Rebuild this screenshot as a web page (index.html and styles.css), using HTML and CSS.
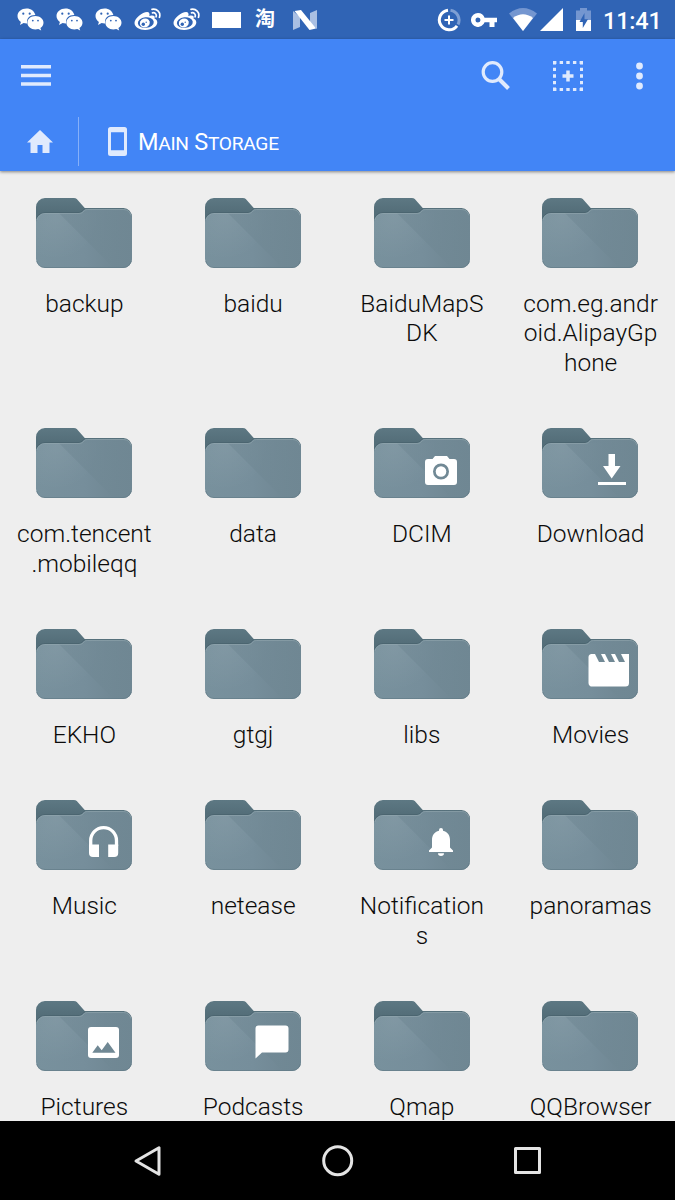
FILE: index.html
```html
<!DOCTYPE html>
<html lang="en">
<head>
<meta charset="utf-8">
<title>Main Storage</title>
<link rel="stylesheet" href="styles.css">
</head>
<body>
<svg class="defs" aria-hidden="true">
  <defs>
    <linearGradient id="front" x1="0" y1="0" x2="1" y2="0"><stop offset="0" stop-color="#78919d"/><stop offset=".5" stop-color="#768e9b"/><stop offset="1" stop-color="#6d8490"/></linearGradient>
    <linearGradient id="shade" gradientUnits="userSpaceOnUse" x1="30" y1="20" x2="80" y2="60"><stop offset="0" stop-color="#718995" stop-opacity=".6"/><stop offset="1" stop-color="#708894" stop-opacity=".75"/></linearGradient>
    <linearGradient id="back" x1="0" y1="0" x2="0" y2="1"><stop offset="0" stop-color="#5d7883"/><stop offset=".25" stop-color="#546e79"/><stop offset="1" stop-color="#526c77"/></linearGradient>
    <radialGradient id="shine" gradientUnits="userSpaceOnUse" cx="20" cy="18" r="44"><stop offset="0" stop-color="#fff" stop-opacity=".07"/><stop offset="1" stop-color="#fff" stop-opacity="0"/></radialGradient>
  </defs>
  <symbol id="folder" viewBox="0 0 97 71" preserveAspectRatio="none">
    <path fill="url(#back)" d="M0 9a9 9 0 0 1 9-9H38q2 0 3 1l8 9H88a8.500 9 0 0 1 8.500 9V55H0z"/>
    <path fill="#465f6a" d="M0 24a9 9 0 0 1 9-10H43q2 0 3-1l3-3v3L40 20H0z" opacity=".6"/>
    <path fill="url(#front)" d="M0 24a9 9 0 0 1 9-9H43q2 0 3.500-1.200L48 12.200Q49.500 11 52 11H88a8.500 9 0 0 1 8.500 9V61a9 9 0 0 1-9 9H9a9 9 0 0 1-9-9z"/>
    <path fill="url(#shine)" d="M0 24a9 9 0 0 1 9-9H70L75 70H9a9 9 0 0 1-9-9z"/>
    <path fill="url(#shade)" d="M23 15H43q2 0 3.500-1.200L48 12.200Q49.500 11 52 11H88a8.500 9 0 0 1 8.500 9V61a9 9 0 0 1-9 9H78z"/>
    <path fill="none" stroke="#95a8b1" stroke-opacity=".55" stroke-width="1" d="M1 22a8 8 0 0 1 8-6.500H43.500q2 0 3.500-1.200L48.500 12.800Q49.500 11.500 52 11.500H88a8 8 0 0 1 7.500 6"/>
    <path fill="none" stroke="#607984" stroke-opacity=".6" d="M.8 63a8.500 8.500 0 0 0 8.200 6.500H87.500a8.500 8.500 0 0 0 8.200-6.500"/>
  </symbol>
  <symbol id="wechat" viewBox="0 0 27 23">
    <path fill="#fff" d="M9.500.5C4.500.5.500 3.800.500 8c0 2.400 1.300 4.500 3.400 5.900L3 17l3.600-1.900c1.200.3 2.300.5 3.600.4C9 10.500 13 7 18.400 7.100 17.500 3.200 14 .5 9.500.500z"/>
    <path fill="#fff" d="M18.400 8c-4.500 0-8 2.900-8 6.700s3.500 6.700 8 6.700c1 0 2-.2 2.900-.4l2.900 1.600-.8-2.600c2-1.300 3.100-3.100 3.100-5.300 0-3.800-3.600-6.700-8.100-6.700z"/>
    <g fill="#3064b5"><circle cx="6.300" cy="5.700" r="1.100"/><circle cx="12.700" cy="5.700" r="1.100"/><circle cx="15.800" cy="12.600" r=".9"/><circle cx="21" cy="12.600" r=".9"/></g>
  </symbol>
  <symbol id="weibo" viewBox="0 0 27 23">
    <path fill="#fff" d="M20.500 10.500c.8-2-.3-3.300-3.300-2.900l-1.900.5c.8-2.400 0-4.100-2.200-4.100C8.500 4 .5 10.200.5 15c0 4 5 7 10.600 7 7.200 0 12.200-4 12.200-7.500 0-2-1-3.300-2.800-4z"/>
    <ellipse cx="11.800" cy="14.600" rx="8" ry="5.300" transform="rotate(-7 11.800 14.600)" fill="#3064b5"/>
    <ellipse cx="10.800" cy="15" rx="5" ry="4.400" transform="rotate(-20 10.800 15)" fill="#fff"/>
    <circle cx="9.300" cy="16.200" r="1.700" fill="#3064b5"/><circle cx="12.200" cy="14.300" r=".7" fill="#3064b5"/>
    <path fill="none" stroke="#fff" stroke-width="1.700" stroke-linecap="round" d="M18 1.300c5-1 9 3 7.500 8M18.500 4.800c2.700-.5 4.400 1.600 3.600 4"/>
  </symbol>
</svg>

<div class="screen">
  <header class="statusbar">
    <div class="notices">
      <svg class="n-icon"><use href="#wechat"/></svg>
      <svg class="n-icon"><use href="#wechat"/></svg>
      <svg class="n-icon"><use href="#wechat"/></svg>
      <svg class="n-icon"><use href="#weibo"/></svg>
      <svg class="n-icon"><use href="#weibo"/></svg>
      <span class="blank"></span>
      <span class="tao">淘</span>
      <svg class="nougat" viewBox="0 0 24 20"><path fill="#a9bfe3" d="M0 1l7 6v10l-7 3zM17 3l7-3v19l-7-5z"/><path fill="#fff" d="M1.500 1L8 0l15 18.500L16.500 20z"/></svg>
    </div>
    <div class="system">
      <svg class="saver" viewBox="0 0 24 24" fill="none"><path stroke="#7e9fd4" stroke-width="3" d="M13.500 2.200a10 10 0 0 1 7.500 14.300"/><path stroke="#fff" stroke-width="3" d="M11 2.200a9.800 9.800 0 1 0 9 15.600"/><path stroke="#fff" stroke-width="2" d="M12 7.500v9M7.500 12h9"/></svg>
      <svg class="key" viewBox="0 0 26 14"><path fill="#fff" fill-rule="evenodd" d="M7 0a7 7 0 0 1 6.600 4.700H26v4.600h-2.500V14h-5V9.300h-4.900A7 7 0 1 1 7 0zm0 4.500a2.500 2.500 0 1 0 0 5 2.500 2.500 0 0 0 0-5z"/></svg>
      <svg class="wifi" viewBox="0 0 28 23"><path fill="#7496d0" d="M0 5.500Q14-5.500 28 5.500L14 23z"/><path fill="#fff" d="M4 10Q14 2.500 24 10L14 23z"/></svg>
      <svg class="cell" viewBox="0 0 23 23"><path fill="#fff" d="M23 0v23H0z"/></svg>
      <svg class="battery" viewBox="0 0 15 23"><path fill="#7496d0" d="M4 0h7v2.500h4V23H0V2.500h4z"/><path fill="#fff" d="M0 12h15v11H0z"/><path fill="#3064b5" d="M8.500 5L3.500 14h3.300v6L12 11.200H8.500z"/></svg>
      <span class="clock">11:41</span>
    </div>
  </header>

  <section class="appbar">
    <div class="toolbar">
      <svg class="menu" viewBox="0 0 30 21" fill="#e0eafd"><path d="M0 0h30v3.500H0zM0 8.700h30v3.500H0zM0 17.300h30v3.500H0z"/></svg>
      <div class="actions">
        <svg class="search" viewBox="0 0 30 30" fill="none" stroke="#e0eafd"><circle cx="11.500" cy="11" r="9.300" stroke-width="3.200"/><path stroke-width="4" d="M18.500 18.500l9 9"/></svg>
        <svg class="select" viewBox="0 0 30 30"><g fill="none" stroke="#e0eafd" stroke-width="3"><path stroke-dasharray="3.400 3.250" d="M0 1.500h30M0 28.500h30"/><path stroke-dasharray="3.400 3.250" d="M1.500 0v30M28.500 0v30"/><path stroke-width="3.500" d="M15 9.500v11M9.500 15h11"/></g></svg>
        <svg class="more" viewBox="0 0 7 28" fill="#e0eafd"><circle cx="3.500" cy="4" r="3.400"/><circle cx="3.500" cy="14" r="3.400"/><circle cx="3.500" cy="24" r="3.400"/></svg>
      </div>
    </div>
    <nav class="crumbs">
      <svg class="home" viewBox="0 0 26 23"><path fill="#e0eafd" d="M13 0l13 12.500h-3.500V23H15.500v-8h-5v8H3.500V12.500H0z"/></svg>
      <span class="divider"></span>
      <svg class="phone" viewBox="0 0 19 29"><path fill="#e0eafd" fill-rule="evenodd" d="M2.500 0h14A2.500 2.500 0 0 1 19 2.500v24a2.500 2.500 0 0 1-2.500 2.500h-14A2.500 2.500 0 0 1 0 26.500v-24A2.500 2.500 0 0 1 2.500 0zM3 5.300v18h13v-18z"/></svg>
      <span class="title">M<small>AIN</small> S<small>TORAGE</small></span>
    </nav>
  </section>

  <main class="grid">
    <div class="item"><svg class="icon"><use href="#folder"/></svg><span>backup</span></div>
    <div class="item"><svg class="icon"><use href="#folder"/></svg><span>baidu</span></div>
    <div class="item"><svg class="icon"><use href="#folder"/></svg><span>BaiduMapS<br>DK</span></div>
    <div class="item"><svg class="icon"><use href="#folder"/></svg><span>com.eg.andr<br>oid.AlipayGp<br>hone</span></div>

    <div class="item"><svg class="icon"><use href="#folder"/></svg><span>com.tencent<br>.mobileqq</span></div>
    <div class="item"><svg class="icon"><use href="#folder"/></svg><span>data</span></div>
    <div class="item"><svg class="icon"><use href="#folder"/><path fill="#fff" fill-rule="evenodd" d="M61 28h12l2.500 3H80a3 3 0 0 1 3 3v20a3 3 0 0 1-3 3H54a3 3 0 0 1-3-3V34a3 3 0 0 1 3-3h4.500zM67 35.500a8 8 0 1 0 0 16 8 8 0 0 0 0-16z"/><circle cx="67" cy="43.500" r="5.300" fill="#fff"/></svg><span>DCIM</span></div>
    <div class="item"><svg class="icon"><use href="#folder"/><path fill="#fff" d="M66.500 26H73v12h5.500L69.700 50.500 61 38h5.500zM56 54h28v3H56z"/></svg><span>Download</span></div>

    <div class="item"><svg class="icon"><use href="#folder"/></svg><span>EKHO</span></div>
    <div class="item"><svg class="icon"><use href="#folder"/></svg><span>gtgj</span></div>
    <div class="item"><svg class="icon"><use href="#folder"/></svg><span>libs</span></div>
    <div class="item"><svg class="icon"><use href="#folder"/><path fill="#fff" d="M50 25h3l4 8h6l-4-8h4l4 8h6l-4-8h4l4 8h6l-4-8h8v29a3.500 3.500 0 0 1-3.500 3.500h-33A3.500 3.500 0 0 1 46.500 54V28a3 3 0 0 1 3.500-3z"/></svg><span>Movies</span></div>

    <div class="item"><svg class="icon"><use href="#folder"/><path fill="none" stroke="#fff" stroke-width="3.300" d="M54.700 46v-5.500a12.900 12.900 0 0 1 25.800 0V46"/><path fill="#fff" d="M53 44.500h10V57h-6a4 4 0 0 1-4-4zM72.200 44.500h10V53a4 4 0 0 1-4 4h-6z"/></svg><span>Music</span></div>
    <div class="item"><svg class="icon"><use href="#folder"/></svg><span>netease</span></div>
    <div class="item"><svg class="icon"><use href="#folder"/><path fill="#fff" d="M67 28a2 2 0 0 1 2 2v.8c4.600 1 7 4.600 7 9.200v7.500l3 3V52H55v-1.500l3-3V40c0-4.600 2.400-8.200 7-9.200V30a2 2 0 0 1 2-2zM64 53.300h6a3 2.700 0 0 1-6 0z"/></svg><span>Notification<br>s</span></div>
    <div class="item"><svg class="icon"><use href="#folder"/></svg><span>panoramas</span></div>

    <div class="item"><svg class="icon"><use href="#folder"/><rect x="52" y="26" width="31" height="31" rx="3" fill="#fff"/><path fill="#708894" d="M56.300 51.800l5.400-7.500 4 5 6-8.300 7.800 10.800z"/></svg><span>Pictures</span></div>
    <div class="item"><svg class="icon"><use href="#folder"/><path fill="#fff" d="M53.500 24.500h27a3 3 0 0 1 3 3v21a3 3 0 0 1-3 3H57l-6.500 6v-30a3 3 0 0 1 3-3z"/></svg><span>Podcasts</span></div>
    <div class="item"><svg class="icon"><use href="#folder"/></svg><span>Qmap</span></div>
    <div class="item"><svg class="icon"><use href="#folder"/></svg><span>QQBrowser</span></div>
  </main>

  <footer class="navbar">
    <svg class="nav-icon" viewBox="0 0 32 32"><path d="M28 2.700v26.600L5 16z"/></svg>
    <svg class="nav-icon" viewBox="0 0 32 32"><circle cx="15.700" cy="15.700" r="14"/></svg>
    <svg class="nav-icon" viewBox="0 0 32 32"><rect x="3.500" y="3.500" width="24" height="24"/></svg>
  </footer>
</div>
</body>
</html>
```
FILE: styles.css
```css
body {
  margin: 0;
  font-family: Roboto, "Noto Sans CJK SC", sans-serif;
}

svg {
  display: block;
  flex: none;
}

.defs {
  position: absolute;
  width: 0;
  height: 0;
}

.screen {
  width: 675px;
  height: 1200px;
  display: flex;
  flex-direction: column;
  overflow: hidden;
  background: #eee;
}

.statusbar {
  flex: none;
  height: 39px;
  box-sizing: border-box;
  padding: 0 14px 0 16.500px;
  display: flex;
  justify-content: space-between;
  background: #3064b5;
  color: #fff;
}

.notices,
.system {
  display: flex;
  align-items: center;
}

.n-icon {
  width: 27px;
  height: 23px;
  margin-right: 12.200px;
}

.blank {
  width: 28.500px;
  height: 16px;
  margin-right: 14px;
  background: #fff;
}

.tao {
  width: 22px;
  margin-right: 16.500px;
  padding-bottom: 3px;
  font-family: "Noto Sans CJK SC", sans-serif;
  font-size: 20px;
  font-weight: 700;
  line-height: 30px;
}

.nougat {
  width: 24px;
  height: 20px;
}

.saver {
  width: 24px;
  height: 24px;
  margin-right: 10px;
}

.key {
  width: 26px;
  height: 14px;
  margin-right: 12px;
}

.wifi {
  width: 28px;
  height: 23px;
  margin-right: 3px;
}

.cell {
  width: 23px;
  height: 23px;
  margin-right: 13px;
}

.battery {
  width: 15px;
  height: 23px;
  margin-right: 12px;
}

.clock {
  width: 58px;
  padding-top: 3px;
  font-size: 23.500px;
  font-weight: 500;
  line-height: 39px;
  letter-spacing: -.2px;
  white-space: nowrap;
}

.appbar {
  flex: none;
  height: 132px;
  background: #4285f6;
  box-shadow: 0 1px 3px rgba(0, 0, 0, .45);
}

.toolbar {
  height: 73px;
  padding: 0 32.500px 0 21px;
  display: flex;
  align-items: center;
  justify-content: space-between;
}

.menu {
  width: 30px;
  height: 21px;
}

.actions {
  display: flex;
  align-items: center;
}

.search {
  width: 30px;
  height: 30px;
  margin-right: 41.500px;
}

.select {
  width: 30px;
  height: 30px;
  margin-right: 53px;
}

.more {
  width: 7px;
  height: 28px;
}

.crumbs {
  height: 58px;
  padding-left: 27px;
  display: flex;
  align-items: center;
}

.home {
  width: 26px;
  height: 23px;
  margin-right: 25px;
}

.divider {
  width: 1px;
  height: 49px;
  margin-right: 29px;
  background: #86b0f9;
}

.phone {
  width: 19px;
  height: 29px;
  margin-right: 11px;
}

.title {
  padding-top: 4px;
  color: #fff;
  font-size: 23.500px;
  line-height: 30px;
  letter-spacing: -.3px;
  white-space: pre;
}

.title small {
  font-size: 19.200px;
}

.grid {
  flex: 1;
  min-height: 0;
  padding-top: 27px;
  display: grid;
  grid-template-columns: repeat(4, 1fr);
  align-content: start;
  overflow: hidden;
}

.item {
  display: flex;
  flex-direction: column;
  align-items: center;
  padding-bottom: 50.900px;
  color: #0b0b0b;
  font-size: 24.500px;
  font-weight: 300;
  line-height: 29.400px;
  text-align: center;
  white-space: nowrap;
}

.icon {
  width: 96.500px;
  height: 71px;
  margin-bottom: 20px;
}

.navbar {
  flex: none;
  height: 79px;
  padding: 0 131px;
  display: flex;
  align-items: center;
  justify-content: space-between;
  background: #000;
}

.nav-icon {
  width: 32px;
  height: 32px;
  fill: none;
  stroke: #e4e4e4;
  stroke-width: 3;
  stroke-linejoin: round;
}
```
